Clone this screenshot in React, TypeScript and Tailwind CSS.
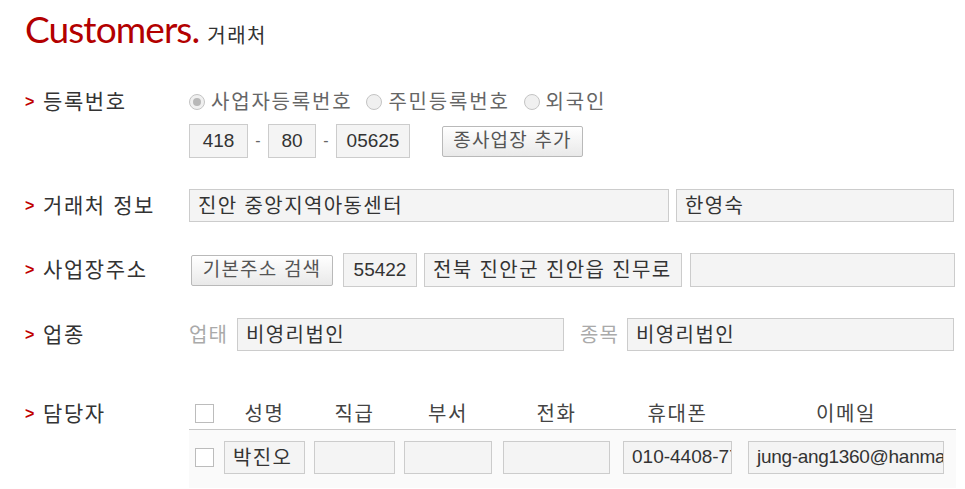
import type { ReactNode } from "react";

function Field({ w, children, center, className = "" }: { w: string; children?: ReactNode; center?: boolean; className?: string }) {
  return (
    <div
      className={`${w} h-[33px] shrink-0 border border-[#cccccc] bg-[#f4f4f4] px-2 flex items-center overflow-hidden whitespace-nowrap text-[19px] text-[#333] ${center ? "justify-center" : ""} ${className}`}
    >
      {children}
    </div>
  );
}

function Btn({ w, children }: { w: string; children: ReactNode }) {
  return (
    <div
      className={`${w} h-[31px] shrink-0 flex items-center justify-center border border-[#b9b9b9] rounded-[2px] bg-gradient-to-b from-white to-[#e9e9e9] text-[19px] tracking-[1.2px] text-[#555] shadow-[inset_0_1px_0_#fff]`}
    >
      {children}
    </div>
  );
}

function Label({ children, h }: { children: ReactNode; h: string }) {
  return (
    <div className={`w-[164px] shrink-0 ${h} flex items-center`}>
      <span className="text-[#c00000] font-bold text-[16px] w-[18px] font-['Liberation_Sans',sans-serif]">&gt;</span>
      <span className="text-[21px] tracking-[1.6px] text-[#333]">{children}</span>
    </div>
  );
}

function Radio({ checked, children }: { checked?: boolean; children: ReactNode }) {
  return (
    <div className="flex items-center gap-[6px] text-[#666] text-[20px] tracking-[1.8px]">
      <span className="w-[16px] h-[16px] rounded-full border border-[#c4c4c4] bg-[#f0f0f0] flex items-center justify-center">
        {checked && <span className="w-[8px] h-[8px] rounded-full bg-[#b8b8b8]" />}
      </span>
      {children}
    </div>
  );
}

function Check() {
  return <span className="w-[19px] h-[19px] border border-[#bcbcbc] bg-white shrink-0" />;
}

const ko = "text-[20px] tracking-[1.4px]";

const cols = [
  { label: "성명", w: "w-[81px]", ml: "ml-[10px]", value: "박진오", cls: ko },
  { label: "직급", w: "w-[81px]", ml: "ml-[9px]", value: "", cls: "" },
  { label: "부서", w: "w-[88px]", ml: "ml-[9px]", value: "", cls: "" },
  { label: "전화", w: "w-[107px]", ml: "ml-[11px]", value: "", cls: "" },
  { label: "휴대폰", w: "w-[109px]", ml: "ml-[13px]", value: "010-4408-7788", cls: "text-[18px]" },
  { label: "이메일", w: "w-[196px]", ml: "ml-[16px]", value: "jung-ang1360@hanmail.net", cls: "text-[18px] tracking-[-0.3px]" },
];

export default function App() {
  return (
    <div className="w-[965px] h-[489px] overflow-hidden bg-white pl-[25px] font-['Liberation_Sans','Noto_Sans_CJK_KR',sans-serif]">
      <div className="h-[88px] pt-[1px] flex items-baseline">
        <span className="text-[#b30000] text-[37px] font-['Lato',sans-serif] tracking-[-0.9px]">Customers.</span>
        <span className="ml-[8px] text-[20px] tracking-[1.5px] text-[#333]">거래처</span>
      </div>

      <div className="flex">
        <Label h="h-[28px]">등록번호</Label>
        <div className="flex flex-col">
          <div className="h-[28px] flex items-center gap-[14px]">
            <Radio checked>사업자등록번호</Radio>
            <Radio>주민등록번호</Radio>
            <Radio>외국인</Radio>
          </div>
          <div className="mt-[8px] flex items-center">
            <Field w="w-[59px]" center className="h-[34px]">418</Field>
            <span className="w-[20px] text-center text-[#666]">-</span>
            <Field w="w-[48px]" center className="h-[34px]">80</Field>
            <span className="w-[20px] text-center text-[#666]">-</span>
            <Field w="w-[74px]" center className="h-[34px]">05625</Field>
            <div className="ml-[32px]">
              <Btn w="w-[141px]">종사업장 추가</Btn>
            </div>
          </div>
        </div>
      </div>

      <div className="flex mt-[31px]">
        <Label h="h-[33px]">거래처 정보</Label>
        <Field w="w-[480px]" className={ko}>진안 중앙지역아동센터</Field>
        <Field w="w-[278px]" className={`ml-[7px] ${ko}`}>한영숙</Field>
      </div>

      <div className="flex items-center mt-[31px]">
        <Label h="h-[34px]">사업장주소</Label>
        <div className="ml-[2px]">
          <Btn w="w-[142px]">기본주소 검색</Btn>
        </div>
        <Field w="w-[74px]" center className="ml-[10px] h-[34px]">55422</Field>
        <Field w="w-[258px]" className={`ml-[7px] h-[34px] ${ko}`}>전북 진안군 진안읍 진무로</Field>
        <Field w="w-[265px]" className="ml-[8px] h-[34px]" />
      </div>

      <div className="flex items-center mt-[31px]">
        <Label h="h-[33px]">업종</Label>
        <span className="text-[20px] tracking-[1.2px] text-[#aaa] w-[48px]">업태</span>
        <Field w="w-[327px]" className={ko}>비영리법인</Field>
        <span className="ml-[16px] text-[20px] tracking-[1.2px] text-[#aaa] w-[47px]">종목</span>
        <Field w="w-[327px]" className={ko}>비영리법인</Field>
      </div>

      <div className="flex mt-[47px]">
        <Label h="h-[32px]">담당자</Label>
        <div className="flex flex-col w-[767px]">
          <div className="h-[32px] flex items-center border-b border-[#c8c8c8] pl-[6px]">
            <Check />
            {cols.map((c) => (
              <div key={c.label} className={`${c.w} ${c.ml} text-center text-[20px] tracking-[1.6px] text-[#444]`}>
                {c.label}
              </div>
            ))}
          </div>
          <div className="h-[58px] bg-[#fafafa] pl-[6px] pt-[11px] flex items-start">
            <div className="h-[33px] flex items-center">
              <Check />
            </div>
            {cols.map((c) => (
              <Field key={c.label} w={c.w} className={`${c.ml} ${c.cls}`}>
                {c.value}
              </Field>
            ))}
          </div>
        </div>
      </div>
    </div>
  );
}
